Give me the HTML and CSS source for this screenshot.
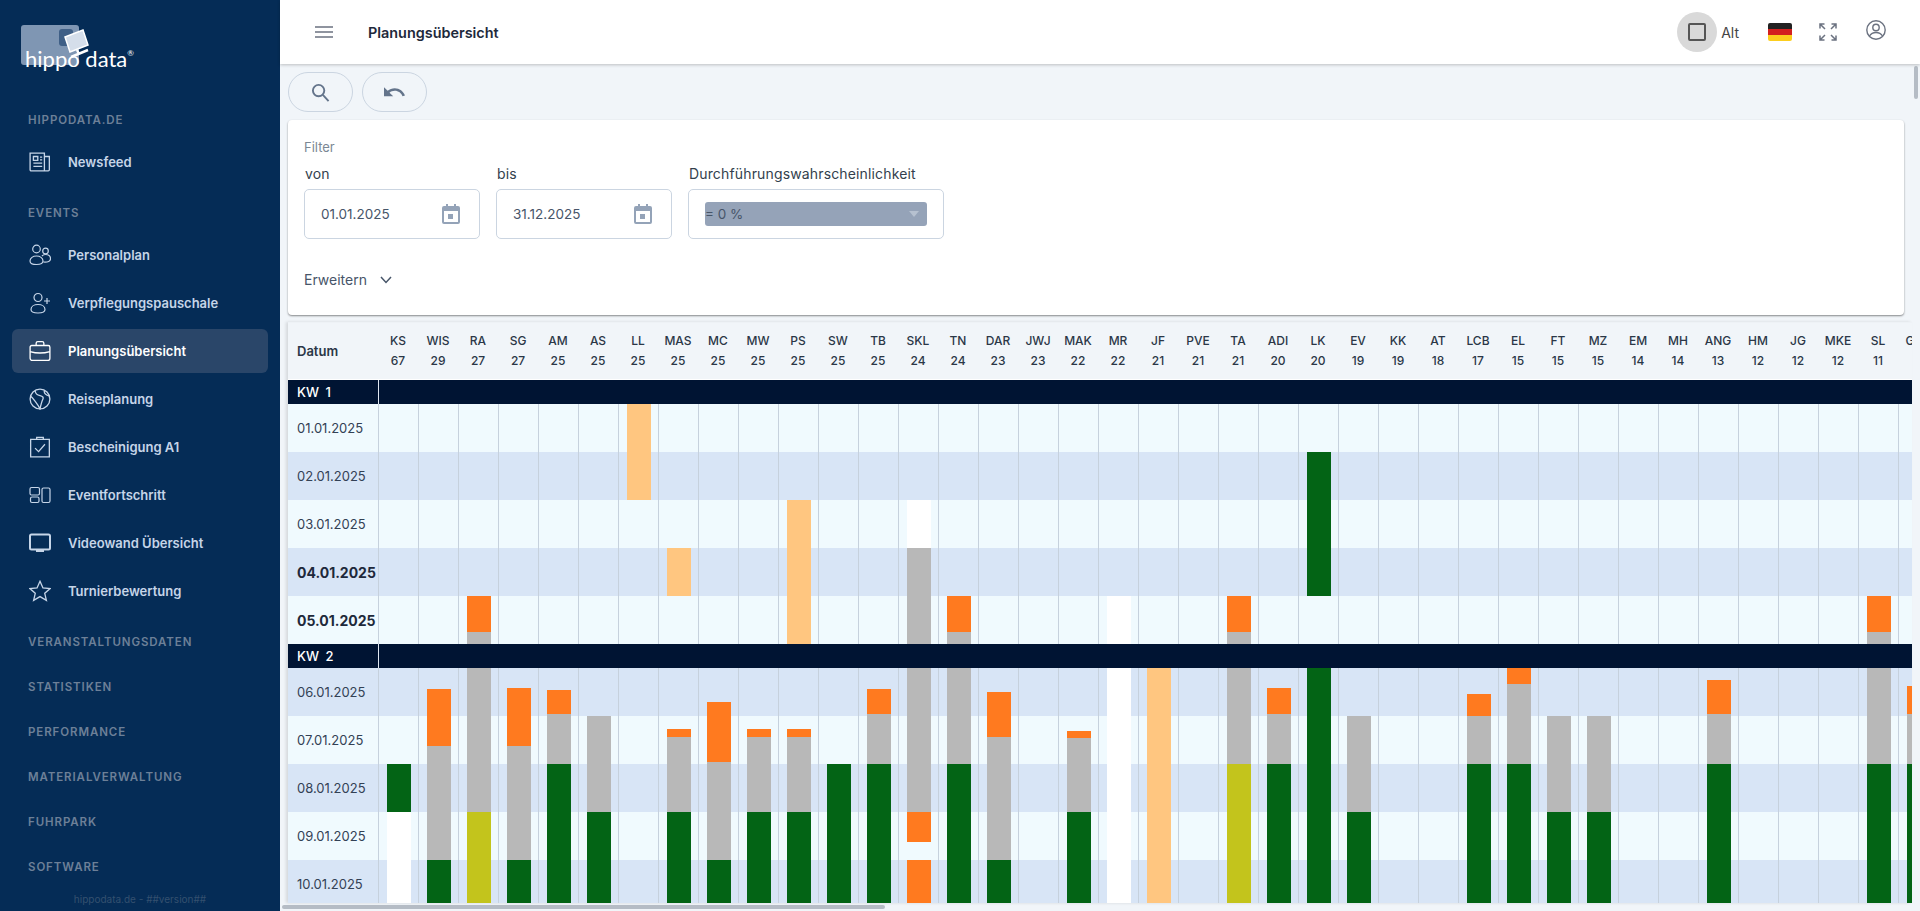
FILE: index.html
```html
<!DOCTYPE html>
<html lang="de">
<head>
  <meta charset="UTF-8">
  <title>Planungsübersicht</title>
  <link rel="stylesheet" href="styles.css">
</head>
<body>
  <aside class="sidebar">
    <div class="logo">
      <svg class="logo-mark" width="120" height="50" viewBox="0 0 120 50">
        <rect x="6" y="10" width="58" height="40" rx="3" fill="#7f96b3"/>
        <rect x="44" y="14" width="14" height="17" rx="3" fill="#3f5f86"/>
        <path d="M50 22 L68 15 L73 30 L55 37 Z" fill="#d5deea" stroke="#fff" stroke-width="1.500"/>
        <path d="M62 35 L64 39 M56 42 L73 35" stroke="#fff" stroke-width="2.500" fill="none"/>
      </svg>
      <span class="logo-text">hippo data<sup>®</sup></span>
    </div>

    <nav class="nav">
      <div class="nav-head">HIPPODATA.DE</div>
      <a class="nav-item">
        <svg class="nav-icon" viewBox="0 0 20 20"><path d="M1 2h13v16H2a1 1 0 0 1-1-1zM14 5h4.500v12a1 1 0 0 1-1 1H14M4 5h4v3.500H4zM10 5.500h2M10 8h2M4 11h8M4 14h8"/></svg>
        Newsfeed
      </a>

      <div class="nav-head">EVENTS</div>
      <a class="nav-item">
        <svg class="nav-icon" viewBox="0 0 22 22"><circle cx="7.500" cy="5" r="3.800"/><circle cx="16.500" cy="7" r="2.800"/><path d="M1 17c0-3 3-5 6.500-5s6.500 2 6.500 5-3 3.500-6.500 3.500S1 20 1 17zM13 12c1-1.200 2.300-1.500 3.500-1.500 3 0 5 1.800 5 4.300s-2.500 3.500-7 3.200"/></svg>
        Personalplan
      </a>
      <a class="nav-item">
        <svg class="nav-icon" viewBox="0 0 22 22"><circle cx="9" cy="5.500" r="4"/><path d="M2 17.500c0-3 3-5 7-5s7 2 7 5-3 3.500-7 3.500-7-.5-7-3.500zM18 6v6M15 9h6"/></svg>
        Verpflegungspauschale
      </a>
      <a class="nav-item active">
        <svg class="nav-icon" viewBox="0 0 20 20"><path d="M6.500 5V3a1.500 1.500 0 0 1 1.500-1.500h4A1.500 1.500 0 0 1 13.500 3v2M2.500 5h15A1.500 1.500 0 0 1 19 6.500v10a2 2 0 0 1-2 2H3a2 2 0 0 1-2-2v-10A1.500 1.500 0 0 1 2.500 5zM1 10.500c5 1.500 13 1.500 18 0M10 11.500v1"/></svg>
        Planungsübersicht
      </a>
      <a class="nav-item">
        <svg class="nav-icon" viewBox="0 0 20 20"><circle cx="10" cy="10" r="9"/><path d="M5.500 2.500c.5 3 2 4 4.500 4.500s3.500 1.500 2.500 3.500-1.500 4-2.500 8.500c-1.500-3-3-5-4.500-7S3 8.500 1.500 7.500M14 2.200c-.5 2 0 3.800 4.500 5"/></svg>
        Reiseplanung
      </a>
      <a class="nav-item">
        <svg class="nav-icon" viewBox="0 0 20 20"><path d="M1.500 3h17v16h-17zM7 3V1.200h6V3M5.500 11l3.200 3.200L14.500 7.500"/></svg>
        Bescheinigung A1
      </a>
      <a class="nav-item">
        <svg class="nav-icon" viewBox="0 0 22 22"><rect x="1" y="3.500" width="9.500" height="7.500" rx="1.500"/><rect x="1.500" y="13" width="8.500" height="5.500" rx="1.500"/><rect x="13" y="4" width="8" height="14.500" rx="1.500"/></svg>
        Eventfortschritt
      </a>
      <a class="nav-item">
        <svg class="nav-icon nav-icon-bold" viewBox="0 0 22 22"><rect x="1" y="2.500" width="20" height="15" rx="1.500"/><path d="M7 19h8"/></svg>
        Videowand Übersicht
      </a>
      <a class="nav-item">
        <svg class="nav-icon" viewBox="0 0 20 20"><path d="M10 1.200l2.700 6 6.500.6-4.900 4.300 1.500 6.400L10 15.100l-5.800 3.400 1.500-6.400L.8 7.800l6.500-.6z"/></svg>
        Turnierbewertung
      </a>

      <div class="nav-head">VERANSTALTUNGSDATEN</div>
      <div class="nav-head">STATISTIKEN</div>
      <div class="nav-head">PERFORMANCE</div>
      <div class="nav-head">MATERIALVERWALTUNG</div>
      <div class="nav-head">FUHRPARK</div>
      <div class="nav-head">SOFTWARE</div>
    </nav>
    <div class="sidebar-foot">hippodata.de - ##version##</div>
  </aside>

  <div class="main">
    <header class="topbar">
      <button class="icon-btn menu-btn" aria-label="Menü">
        <svg width="18" height="12" viewBox="0 0 18 12"><path d="M0 1h18M0 6h18M0 11h18" stroke="#6b7280" stroke-width="1.500"/></svg>
      </button>
      <div class="page-title">Planungsübersicht</div>
      <div class="topbar-right">
        <label class="alt-toggle">
          <span class="alt-circle"><span class="alt-box"></span></span>
          Alt
        </label>
        <svg class="flag" width="24" height="18" viewBox="0 0 24 18">
          <rect width="24" height="6" fill="#222"/>
          <rect y="6" width="24" height="6" fill="#d3201f"/>
          <rect y="12" width="24" height="6" fill="#fcce1e"/>
        </svg>
        <svg class="fullscreen" width="18" height="18" viewBox="0 0 18 18" fill="none" stroke="#6b7280" stroke-width="1.500">
          <path d="M1 5.500V1h4.500M1 1l5 5M12.500 1H17v4.500M17 1l-5 5M1 12.500V17h4.500M1 17l5-5M17 12.500V17h-4.500M17 17l-5-5"/>
        </svg>
        <svg class="user" width="20" height="20" viewBox="0 0 20 20" fill="none" stroke="#6b7280" stroke-width="1.400">
          <circle cx="10" cy="10" r="9.200"/><circle cx="10" cy="7.500" r="3.200"/><path d="M3.500 16c1.500-2.500 4-3.500 6.500-3.500s5 1 6.500 3.500"/>
        </svg>
      </div>
    </header>

    <div class="content">
      <div class="toolbar">
        <button class="pill-btn" aria-label="Suchen">
          <svg width="19" height="19" viewBox="0 0 20 20" fill="none" stroke="#64748b" stroke-width="2"><circle cx="8" cy="8" r="6"/><path d="M12.500 12.500l6 6.500"/></svg>
        </button>
        <button class="pill-btn" aria-label="Zurücksetzen">
          <svg width="21" height="10" viewBox="2 7 20.500 9.500"><path d="M12.500 8c-2.650 0-5.050.99-6.900 2.600L2 7v9h9l-3.620-3.620c1.390-1.160 3.160-1.880 5.120-1.880 3.540 0 6.550 2.310 7.600 5.500l2.370-.78C21.080 11.030 17.150 8 12.500 8z" fill="#64748b"/></svg>
        </button>
      </div>

      <section class="filter-card">
        <div class="filter-title">Filter</div>
        <div class="filter-fields">
          <div class="field field-date">
            <div class="field-label">von</div>
            <div class="field-box">
              01.01.2025
              <svg class="cal" viewBox="0 0 18 20"><path d="M4 0h2v2h6V0h2v2h2a2 2 0 0 1 2 2v14a2 2 0 0 1-2 2H2a2 2 0 0 1-2-2V4a2 2 0 0 1 2-2h2zM2 7v11h14V7zm4 3h5v5H6z" fill="#94a3b8" fill-rule="evenodd"/></svg>
            </div>
          </div>
          <div class="field field-date">
            <div class="field-label">bis</div>
            <div class="field-box">
              31.12.2025
              <svg class="cal" viewBox="0 0 18 20"><path d="M4 0h2v2h6V0h2v2h2a2 2 0 0 1 2 2v14a2 2 0 0 1-2 2H2a2 2 0 0 1-2-2V4a2 2 0 0 1 2-2h2zM2 7v11h14V7zm4 3h5v5H6z" fill="#94a3b8" fill-rule="evenodd"/></svg>
            </div>
          </div>
          <div class="field field-select">
            <div class="field-label">Durchführungswahrscheinlichkeit</div>
            <div class="field-box">
              <div class="select-fake">= 0 %<span class="select-arrow"></span></div>
            </div>
          </div>
        </div>
        <div class="expand">
          Erweitern
          <svg width="12" height="8" viewBox="0 0 12 8" fill="none" stroke="#475569" stroke-width="1.500"><path d="M1 1l5 5.500L11 1"/></svg>
        </div>
      </section>

      <div class="plan" id="plan"></div>
    </div>
  </div>

  <div class="scroll-v"></div>
  <div class="scroll-h"></div>

  <script src="app.js"></script>
</body>
</html>
```

FILE: styles.css
```css
* {
  box-sizing: border-box;
}
html, body {
  height: 100%;
}
body {
  margin: 0;
  display: flex;
  height: 911px;
  overflow: hidden;
  background: #f1f5f9;
  font-family: "Inter", "Liberation Sans", sans-serif;
  color: #1e293b;
}

/* sidebar */
.sidebar {
  width: 280px;
  flex-shrink: 0;
  background: #052c56;
  position: relative;
  height: 100%;
}
.logo {
  height: 93px;
  position: relative;
}
.logo-mark {
  position: absolute;
  top: 15px;
  left: 15px;
}
.logo-text {
  position: absolute;
  top: 43px;
  left: 25px;
  color: #fff;
  font-family: "Lato", sans-serif;
  font-size: 22px;
  line-height: 32px;
  white-space: nowrap;
}
.logo-text sup {
  font-size: 8px;
  line-height: 0;
  vertical-align: 11px;
}
.nav {
  display: flex;
  flex-direction: column;
}
.nav-head {
  height: 37px;
  margin-top: 8px;
  padding-left: 28px;
  display: flex;
  align-items: center;
  font-size: 11.500px;
  font-weight: 600;
  letter-spacing: .9px;
  color: #6d8098;
}
.nav-item {
  height: 44px;
  margin: 2px 12px;
  padding-left: 17px;
  border-radius: 6px;
  display: flex;
  align-items: center;
  gap: 17px;
  font-size: 13px;
  font-weight: 600;
  color: #c6d5e8;
}
.nav-item.active {
  background: #2a4669;
  color: #fff;
}
.nav-icon {
  width: 22px;
  height: 22px;
  flex-shrink: 0;
  fill: none;
  stroke: currentColor;
  stroke-width: 1.200;
}
.nav-icon-bold {
  stroke-width: 2;
}
.sidebar-foot {
  position: absolute;
  left: 0;
  right: 0;
  top: 893px;
  text-align: center;
  font-size: 10px;
  color: #34506f;
}

/* top bar */
.main {
  flex: 1;
  min-width: 0;
  display: flex;
  flex-direction: column;
}
.topbar {
  height: 64px;
  flex-shrink: 0;
  background: #fff;
  display: flex;
  align-items: center;
  padding-left: 35px;
  box-shadow: 0 1px 3px rgba(0, 0, 0, 0.22);
  position: relative;
  z-index: 2;
}
.icon-btn {
  background: none;
  border: none;
  padding: 0;
  display: flex;
}
.page-title {
  margin-left: 35px;
  font-size: 14.400px;
  font-weight: 600;
  color: #1e293b;
}
.topbar-right {
  margin-left: auto;
  margin-right: 34px;
  display: flex;
  align-items: center;
}
.alt-toggle {
  display: flex;
  align-items: center;
  gap: 4px;
  font-size: 14px;
  color: #444;
}
.alt-circle {
  width: 40px;
  height: 40px;
  border-radius: 50%;
  background: #d9d9d9;
  display: flex;
  align-items: center;
  justify-content: center;
}
.alt-box {
  width: 18px;
  height: 18px;
  border: 2px solid #555;
  border-radius: 2px;
}
.flag {
  margin-left: 29px;
  border-radius: 2px;
}
.fullscreen {
  margin-left: 27px;
}
.user {
  margin-left: 29px;
  margin-top: -4px;
}

/* content */
.content {
  flex: 1;
  min-height: 0;
  padding: 8px 16px 0 8px;
  overflow: hidden;
}
.toolbar {
  display: flex;
  gap: 9px;
  height: 40px;
}
.pill-btn {
  width: 65px;
  height: 40px;
  border-radius: 20px;
  border: 1px solid #cbd5e1;
  background: transparent;
  display: flex;
  align-items: center;
  justify-content: center;
  padding: 0;
}
.filter-card {
  margin-top: 8px;
  height: 195px;
  padding: 19px 16px 0;
  background: #fff;
  border-radius: 4px;
  box-shadow: 0 1px 2px rgba(0, 0, 0, 0.45);
}
.filter-title {
  font-size: 13px;
  line-height: 16px;
  color: #7b8794;
}
.filter-fields {
  margin-top: 10px;
  display: flex;
  gap: 16px;
}
.field-label {
  font-size: 14px;
  line-height: 17px;
  height: 24px;
  padding-left: 1px;
  letter-spacing: .15px;
  white-space: nowrap;
  color: #333f4d;
}
.field-box {
  height: 50px;
  border: 1px solid #cbd5e1;
  border-radius: 5px;
  display: flex;
  align-items: center;
  font-size: 13.500px;
  color: #475569;
}
.field-date {
  width: 176px;
}
.field-date .field-box {
  padding: 0 19px 0 16px;
  justify-content: space-between;
}
.field-select {
  width: 256px;
}
.field-select .field-box {
  padding: 0 16px;
}
.cal {
  width: 18px;
  height: 20px;
}
.select-fake {
  width: 100%;
  height: 24px;
  border-radius: 3px;
  background: #95a3b8;
  display: flex;
  align-items: center;
  justify-content: space-between;
  padding-right: 8px;
  color: #475569;
}
.select-arrow {
  width: 0;
  height: 0;
  border-left: 5px solid transparent;
  border-right: 5px solid transparent;
  border-top: 6px solid #b6c1d0;
}
.expand {
  margin-top: 32px;
  display: flex;
  align-items: center;
  gap: 13px;
  font-size: 14px;
  line-height: 17px;
  color: #475569;
}

/* plan table */
.plan {
  margin: 7px -8px 0 0;
  font-size: 13px;
  overflow: hidden;
  width: 1624px;
  height: 581px;
  box-shadow: -2px 0 3px rgba(0, 0, 0, 0.12);
}
.plan-row {
  display: flex;
  width: max-content;
}
.plan-first {
  width: 90px;
  flex-shrink: 0;
  padding-left: 9px;
  display: flex;
  align-items: center;
}
.plan-cell {
  width: 40px;
  height: 48px;
  flex-shrink: 0;
  position: relative;
  border-left: 1px solid #c6d1dd;
}
.plan-head {
  height: 58px;
  background: #f1f5f9;
  border-top: 1px solid #eef2f6;
  border-bottom: 1px solid #fff;
}
.plan-first-head {
  font-weight: 600;
  font-size: 13px;
  color: #2b3747;
}
.plan-col {
  width: 40px;
  flex-shrink: 0;
  text-align: center;
  font-size: 12px;
  font-weight: 500;
  line-height: 20px;
  padding-top: 8px;
  color: #2b3747;
  white-space: nowrap;
}
.plan-kw {
  height: 24px;
  background: #001433;
  color: #fff;
  font-weight: 500;
}
.plan-kw .plan-first {
  width: 91px;
  border-right: 1px solid #dfe7f1;
  word-spacing: 3px;
}
.plan-kw-fill {
  width: 1533px;
}
.plan-day {
  height: 48px;
  color: #334155;
}
.plan-day.odd {
  background: #f0fafe;
}
.plan-day.even {
  background: #d8e5f6;
}
.plan-day.weekend .plan-first {
  font-size: 14px;
  font-weight: 700;
  color: #1e293b;
}
.seg {
  position: absolute;
  left: 8px;
  width: 24px;
}
.seg.green { background: #036415; }
.seg.orange { background: #ff7a1f; }
.seg.gray { background: #b8b8b8; }
.seg.yellow { background: #c3c41c; }
.seg.light { background: #ffc680; }
.seg.white { background: #fff; }

/* scrollbars */
.scroll-v {
  position: absolute;
  top: 66px;
  right: 2px;
  width: 4px;
  height: 33px;
  border-radius: 2px;
  background: #b5bcc5;
}
.scroll-h {
  position: absolute;
  top: 905px;
  left: 282px;
  width: 603px;
  height: 4px;
  border-radius: 2px;
  background: #b5bcc5;
}
```

FILE: app.js
```js
const cols = [
  ["KS", 67], ["WIS", 29], ["RA", 27], ["SG", 27], ["AM", 25], ["AS", 25], ["LL", 25], ["MAS", 25],
  ["MC", 25], ["MW", 25], ["PS", 25], ["SW", 25], ["TB", 25], ["SKL", 24], ["TN", 24], ["DAR", 23],
  ["JWJ", 23], ["MAK", 22], ["MR", 22], ["JF", 21], ["PVE", 21], ["TA", 21], ["ADI", 20], ["LK", 20],
  ["EV", 19], ["KK", 19], ["AT", 18], ["LCB", 17], ["EL", 15], ["FT", 15], ["MZ", 15], ["EM", 14],
  ["MH", 14], ["ANG", 13], ["HM", 12], ["JG", 12], ["MKE", 12], ["SL", 11], ["GAR", ""]
];

// [color, from y, to y] per column, y in px of the page, only the kw rows hide them
const bars = {
  KS: [["green", 764, 812], ["white", 812, 908]],
  WIS: [["orange", 689, 746], ["gray", 746, 860], ["green", 860, 908]],
  RA: [["orange", 596, 632], ["gray", 632, 812], ["yellow", 812, 908]],
  SG: [["orange", 688, 746], ["gray", 746, 860], ["green", 860, 908]],
  AM: [["orange", 690, 714], ["gray", 714, 764], ["green", 764, 908]],
  AS: [["gray", 716, 812], ["green", 812, 908]],
  LL: [["light", 404, 500]],
  MAS: [["light", 548, 596], ["orange", 729, 737], ["gray", 737, 812], ["green", 812, 908]],
  MC: [["orange", 702, 762], ["gray", 762, 860], ["green", 860, 908]],
  MW: [["orange", 729, 737], ["gray", 737, 812], ["green", 812, 908]],
  PS: [["light", 500, 644], ["orange", 729, 737], ["gray", 737, 812], ["green", 812, 908]],
  SW: [["green", 764, 908]],
  TB: [["orange", 689, 714], ["gray", 714, 764], ["green", 764, 908]],
  SKL: [["white", 500, 548], ["gray", 548, 812], ["orange", 812, 842], ["orange", 860, 908]],
  TN: [["orange", 596, 632], ["gray", 632, 764], ["green", 764, 908]],
  DAR: [["orange", 692, 737], ["gray", 737, 860], ["green", 860, 908]],
  MAK: [["orange", 731, 738], ["gray", 738, 812], ["green", 812, 908]],
  MR: [["white", 596, 908]],
  JF: [["light", 668, 908]],
  TA: [["orange", 596, 632], ["gray", 632, 764], ["yellow", 764, 908]],
  ADI: [["orange", 688, 714], ["gray", 714, 764], ["green", 764, 908]],
  LK: [["green", 452, 596], ["green", 668, 908]],
  EV: [["gray", 716, 812], ["green", 812, 908]],
  LCB: [["orange", 694, 716], ["gray", 716, 764], ["green", 764, 908]],
  EL: [["orange", 668, 684], ["gray", 684, 764], ["green", 764, 908]],
  FT: [["gray", 716, 812], ["green", 812, 908]],
  MZ: [["gray", 716, 812], ["green", 812, 908]],
  ANG: [["orange", 680, 714], ["gray", 714, 764], ["green", 764, 908]],
  SL: [["orange", 596, 632], ["gray", 632, 764], ["green", 764, 908]],
  GAR: [["orange", 686, 714], ["gray", 714, 764], ["green", 764, 908]]
};

const weeks = [
  { kw: 1, days: [["01.01.2025", 404], ["02.01.2025", 452], ["03.01.2025", 500], ["04.01.2025", 548, true], ["05.01.2025", 596, true]] },
  { kw: 2, days: [["06.01.2025", 668], ["07.01.2025", 716], ["08.01.2025", 764], ["09.01.2025", 812], ["10.01.2025", 860]] }
];

const plan = document.getElementById('plan');

function el(cls, text) {
  const div = document.createElement('div');
  div.className = cls;
  if (text !== undefined) div.textContent = text;
  return div;
}

const head = el('plan-row plan-head');
head.appendChild(el('plan-first plan-first-head', 'Datum'));
cols.forEach(([name, num]) => {
  const col = el('plan-col');
  col.appendChild(el('', name));
  col.appendChild(el('', num));
  head.appendChild(col);
});
plan.appendChild(head);

let shade = 0;
weeks.forEach((week) => {
  const kwRow = el('plan-row plan-kw');
  kwRow.appendChild(el('plan-first', 'KW ' + week.kw));
  kwRow.appendChild(el('plan-kw-fill'));
  plan.appendChild(kwRow);

  week.days.forEach(([date, top, weekend]) => {
    shade++;
    const row = el('plan-row plan-day ' + (shade % 2 ? 'odd' : 'even') + (weekend ? ' weekend' : ''));
    row.appendChild(el('plan-first', date));
    cols.forEach(([name]) => {
      const cell = el('plan-cell');
      (bars[name] || []).forEach(([color, from, to]) => {
        const a = Math.max(from, top);
        const b = Math.min(to, top + 48);
        if (b <= a) return;
        const seg = el('seg ' + color);
        seg.style.top = (a - top) + 'px';
        seg.style.height = (b - a) + 'px';
        cell.appendChild(seg);
      });
      row.appendChild(cell);
    });
    plan.appendChild(row);
  });
});
```
